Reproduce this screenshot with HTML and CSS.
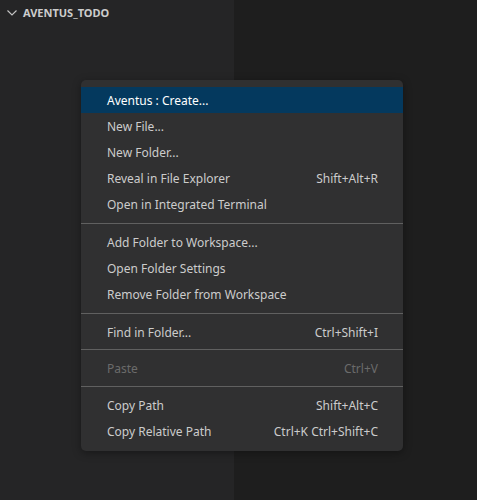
FILE: index.html
```html
<!DOCTYPE html>
<html>
<head>
<meta charset="utf-8">
<link rel="stylesheet" href="styles.css">
</head>
<body>
<div class="workbench">
  <aside class="sidebar">
    <div class="section-header">
      <svg class="chevron" width="16" height="16" viewBox="0 0 16 16"><path d="M3.5 6.5 L8 11 L12.5 6.5" fill="none" stroke="#c5c5c5" stroke-width="1.1"/></svg>
      <span class="section-title">AVENTUS_TODO</span>
    </div>
  </aside>
  <main class="editor"></main>
</div>
<div class="menu">
  <div class="item active"><span>Aventus : Create...</span></div>
  <div class="item"><span>New File...</span></div>
  <div class="item"><span>New Folder...</span></div>
  <div class="item"><span>Reveal in File Explorer</span><span class="key">Shift+Alt+R</span></div>
  <div class="item"><span>Open in Integrated Terminal</span></div>
  <div class="sep"></div>
  <div class="item"><span>Add Folder to Workspace...</span></div>
  <div class="item"><span>Open Folder Settings</span></div>
  <div class="item"><span>Remove Folder from Workspace</span></div>
  <div class="sep"></div>
  <div class="item"><span>Find in Folder...</span><span class="key">Ctrl+Shift+I</span></div>
  <div class="sep sep-tight"></div>
  <div class="item disabled"><span>Paste</span><span class="key">Ctrl+V</span></div>
  <div class="sep sep-mid"></div>
  <div class="item"><span>Copy Path</span><span class="key">Shift+Alt+C</span></div>
  <div class="item"><span>Copy Relative Path</span><span class="key">Ctrl+K Ctrl+Shift+C</span></div>
</div>
</body>
</html>
```
FILE: styles.css
```css
html, body {
  margin: 0;
  padding: 0;
  width: 477px;
  height: 500px;
  overflow: hidden;
  font-family: "Noto Sans", "Open Sans", sans-serif;
}
.workbench {
  display: flex;
  width: 477px;
  height: 500px;
}
.sidebar {
  width: 234px;
  background: #252526;
}
.editor {
  flex: 1;
  background: #1e1e1e;
}
.section-header {
  display: flex;
  align-items: center;
  height: 22px;
  padding-left: 4px;
  gap: 3px;
  margin-top: 1px;
}
.chevron {
  display: block;
}
.section-title {
  color: #cccccc;
  font-size: 11px;
  font-weight: 700;
}
.menu {
  position: absolute;
  left: 81px;
  top: 80px;
  width: 322px;
  box-sizing: border-box;
  padding: 7px 0;
  background: #303031;
  border-radius: 5px;
  box-shadow: 0 2px 8px rgba(0, 0, 0, 0.36);
  color: #cccccc;
  font-size: 12px;
}
.item {
  display: flex;
  align-items: center;
  justify-content: space-between;
  height: 26px;
  padding: 0 25px 0 26px;
}
.item.active {
  background: #04395e;
  color: #ffffff;
}
.item.disabled {
  color: #6b6b6b;
}
.sep {
  height: 1px;
  background: #606060;
  margin: 6px 0 5px;
}
.sep.sep-tight {
  margin: 4px 0 5px;
}
.sep.sep-mid {
  margin: 5px 0 5px;
}
```
